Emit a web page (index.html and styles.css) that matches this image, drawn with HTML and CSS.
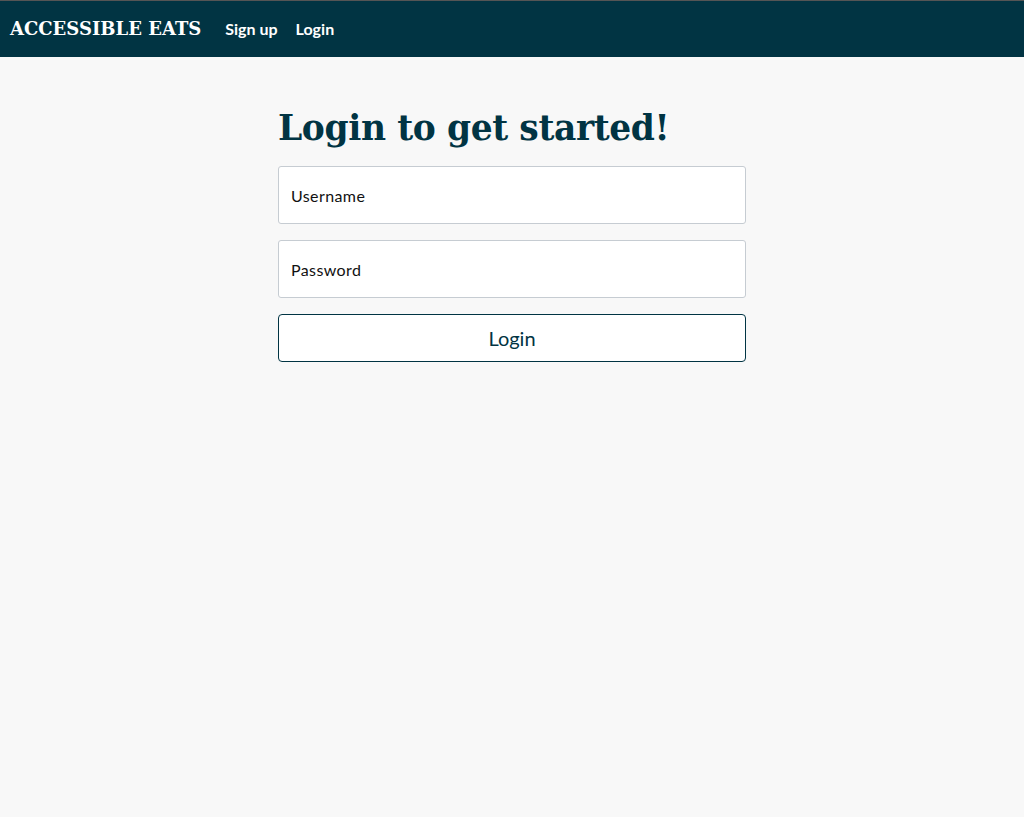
FILE: index.html
```html
<!DOCTYPE html>
<html lang="en">
<head>
<meta charset="utf-8">
<title>Accessible Eats - Login</title>
<link rel="stylesheet" href="styles.css">
</head>
<body>
<header class="navbar">
  <a class="brand" href="#">ACCESSIBLE EATS</a>
  <nav class="nav-links">
    <a href="#">Sign up</a>
    <a href="#">Login</a>
  </nav>
</header>
<main class="content">
  <h1 class="title">Login to get started!</h1>
  <form class="form">
    <input class="field" type="text" placeholder="Username">
    <input class="field" type="password" placeholder="Password">
    <button class="btn" type="button">Login</button>
  </form>
</main>
</body>
</html>
```
FILE: styles.css
```css
* { box-sizing: border-box; }
html, body { margin: 0; padding: 0; }
body {
  background: #f8f8f8;
  font-family: Lato, "Liberation Sans", sans-serif;
  border-top: 1px solid #555;
  min-height: 100vh;
}
.navbar {
  background: #013443;
  height: 56px;
  display: flex;
  align-items: center;
  padding: 0 10px 2px;
  gap: 24px;
}
.brand {
  color: #fff;
  text-decoration: none;
  font-family: "DejaVu Serif", "Liberation Serif", serif;
  font-weight: bold;
  font-size: 18px;
}
.nav-links { display: flex; gap: 18px; }
.nav-links a {
  color: #fff;
  text-decoration: none;
  font-weight: bold;
  font-size: 16px;
}
.content {
  width: 468px;
  margin: 0 auto;
  padding-top: 45px;
}
.title {
  margin: 0 0 12px;
  font-family: "DejaVu Serif", "Liberation Serif", serif;
  font-weight: bold;
  font-size: 34.5px;
  line-height: 52px;
  color: #013443;
  letter-spacing: -0.4px;
}
.form { display: flex; flex-direction: column; gap: 16px; }
.field {
  height: 58px;
  width: 100%;
  border: 1px solid #c6ccd2;
  border-radius: 3px;
  background: #fff;
  padding: 0 12px;
  font-family: Lato, sans-serif;
  font-size: 16px;
  letter-spacing: 0.4px;
  color: #000;
}
.field::placeholder { color: #111; opacity: 1; }
.btn {
  height: 48px;
  width: 100%;
  border: 1px solid #013443;
  border-radius: 4px;
  background: #fff;
  color: #013443;
  font-family: Lato, sans-serif;
  font-size: 20px;
}
```
